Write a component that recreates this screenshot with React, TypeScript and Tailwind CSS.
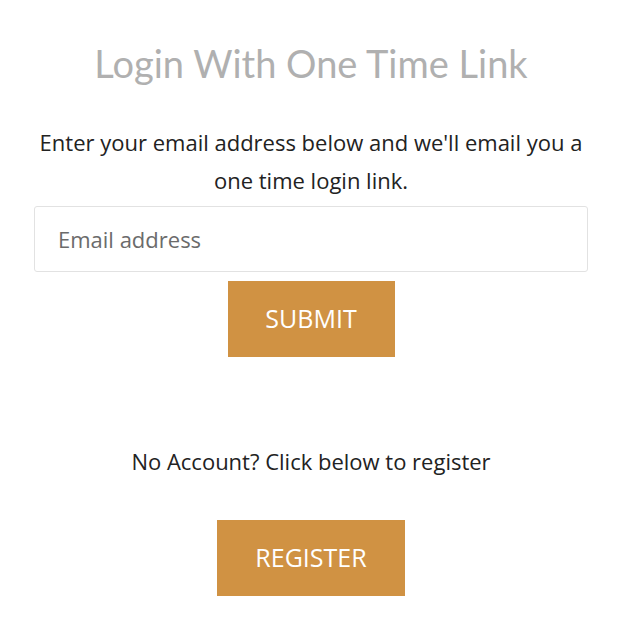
const App = () => {
    return (
        <div className="w-[638px] h-[628px] bg-white overflow-hidden">
            <div className="ml-[34px] w-[554px] flex flex-col items-center pt-[37px] font-['Open_Sans',sans-serif]">
                <h1 className="font-['Lato',sans-serif] text-[38px] leading-[52px] text-[#b0b0b0] font-normal">
                    Login With One Time Link
                </h1>

                <p className="mt-[34px] text-[22px] leading-[38px] text-[#222] text-center">
                    Enter your email address below and we'll email you a one time login link.
                </p>

                <input
                    type="email"
                    placeholder="Email address"
                    className="mt-[7px] w-full h-[66px] px-[23px] border border-[#e2e2e2] rounded-[3px] text-[22px] text-[#333] placeholder:text-[#6b6b6b] outline-none"
                />

                <button className="mt-[9px] w-[167px] h-[76px] bg-[#d09243] text-white text-[25px] uppercase">
                    Submit
                </button>

                <p className="mt-[85px] text-[22px] leading-[38px] text-[#222]">
                    No Account? Click below to register
                </p>

                <button className="mt-[40px] w-[188px] h-[76px] bg-[#d09243] text-white text-[25px] uppercase">
                    Register
                </button>
            </div>
        </div>
    )
}

export default App;
